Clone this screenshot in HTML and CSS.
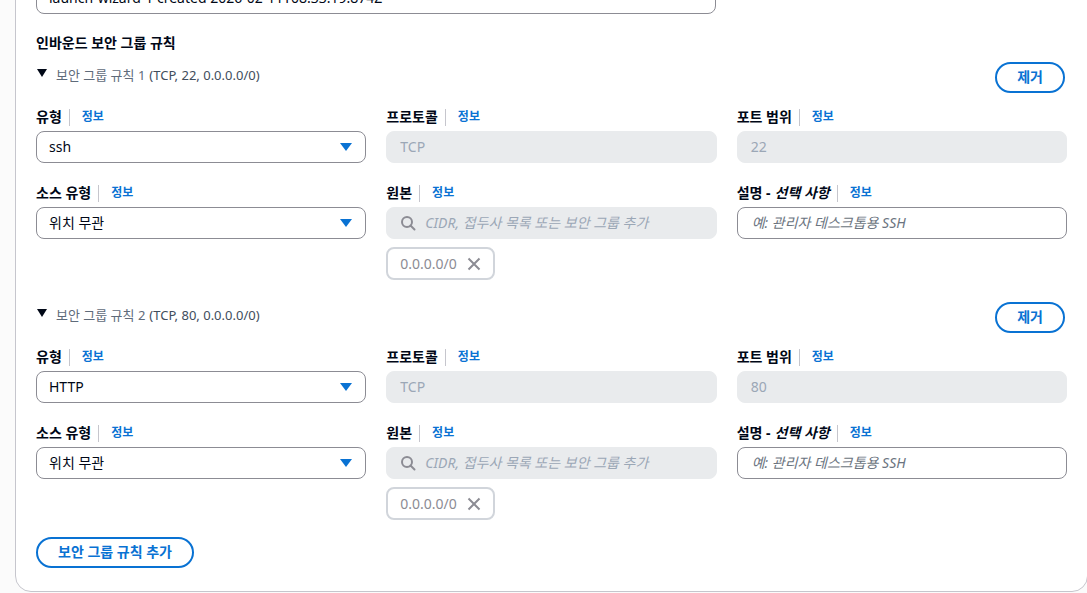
FILE: index.html
```html
<!DOCTYPE html>
<html lang="ko">
<head>
    <meta charset="UTF-8">
    <meta name="viewport" content="width=device-width, initial-scale=1.0">
    <title>인바운드 보안 그룹 규칙</title>
    <link rel="stylesheet" href="styles.css">
</head>
<body>
    <div class="card">
        <div class="top-input">launch-wizard-1 created 2026-02-11T08:33:19.874Z</div>

        <h3 class="section-title">인바운드 보안 그룹 규칙</h3>

        <!-- rule 1 -->
        <div class="rule">
            <div class="rule-head">
                <div class="rule-name">
                    <span class="caret"></span>
                    <span class="rule-title">보안 그룹 규칙 1</span>
                    <span class="rule-sum">(TCP, 22, 0.0.0.0/0)</span>
                </div>
                <button class="btn">제거</button>
            </div>
            <div class="grid">
                <div class="field">
                    <div class="label">유형<span class="sep"></span><a href="#" class="info">정보</a></div>
                    <div class="select">ssh<span class="arrow"></span></div>
                </div>
                <div class="field">
                    <div class="label">프로토콜<span class="sep"></span><a href="#" class="info">정보</a></div>
                    <div class="input disabled">TCP</div>
                </div>
                <div class="field">
                    <div class="label">포트 범위<span class="sep"></span><a href="#" class="info">정보</a></div>
                    <div class="input disabled">22</div>
                </div>
                <div class="field">
                    <div class="label">소스 유형<span class="sep"></span><a href="#" class="info">정보</a></div>
                    <div class="select">위치 무관<span class="arrow"></span></div>
                </div>
                <div class="field">
                    <div class="label">원본<span class="sep"></span><a href="#" class="info">정보</a></div>
                    <div class="input disabled search">
                        <svg class="search-ico" width="16" height="16" viewBox="0 0 16 16"><circle cx="7" cy="7" r="5" fill="none" stroke="#8c8c94" stroke-width="2"/><path d="M10.5 10.5 L14.5 14.5" stroke="#8c8c94" stroke-width="2" stroke-linecap="round"/></svg>
                        <span class="ph">CIDR, 접두사 목록 또는 보안 그룹 추가</span>
                    </div>
                    <div class="token">0.0.0.0/0
                        <svg width="16" height="16" viewBox="0 0 16 16"><path d="M2.5 2.5 L13.5 13.5 M13.5 2.5 L2.5 13.5" stroke="#8c8c94" stroke-width="2"/></svg>
                    </div>
                </div>
                <div class="field">
                    <div class="label">설명 - <i>선택 사항</i><span class="sep"></span><a href="#" class="info">정보</a></div>
                    <div class="input"><span class="ph dark">예: 관리자 데스크톱용 SSH</span></div>
                </div>
            </div>
        </div>

        <!-- rule 2 -->
        <div class="rule">
            <div class="rule-head">
                <div class="rule-name">
                    <span class="caret"></span>
                    <span class="rule-title">보안 그룹 규칙 2</span>
                    <span class="rule-sum">(TCP, 80, 0.0.0.0/0)</span>
                </div>
                <button class="btn">제거</button>
            </div>
            <div class="grid">
                <div class="field">
                    <div class="label">유형<span class="sep"></span><a href="#" class="info">정보</a></div>
                    <div class="select">HTTP<span class="arrow"></span></div>
                </div>
                <div class="field">
                    <div class="label">프로토콜<span class="sep"></span><a href="#" class="info">정보</a></div>
                    <div class="input disabled">TCP</div>
                </div>
                <div class="field">
                    <div class="label">포트 범위<span class="sep"></span><a href="#" class="info">정보</a></div>
                    <div class="input disabled">80</div>
                </div>
                <div class="field">
                    <div class="label">소스 유형<span class="sep"></span><a href="#" class="info">정보</a></div>
                    <div class="select">위치 무관<span class="arrow"></span></div>
                </div>
                <div class="field">
                    <div class="label">원본<span class="sep"></span><a href="#" class="info">정보</a></div>
                    <div class="input disabled search">
                        <svg class="search-ico" width="16" height="16" viewBox="0 0 16 16"><circle cx="7" cy="7" r="5" fill="none" stroke="#8c8c94" stroke-width="2"/><path d="M10.5 10.5 L14.5 14.5" stroke="#8c8c94" stroke-width="2" stroke-linecap="round"/></svg>
                        <span class="ph">CIDR, 접두사 목록 또는 보안 그룹 추가</span>
                    </div>
                    <div class="token">0.0.0.0/0
                        <svg width="16" height="16" viewBox="0 0 16 16"><path d="M2.5 2.5 L13.5 13.5 M13.5 2.5 L2.5 13.5" stroke="#8c8c94" stroke-width="2"/></svg>
                    </div>
                </div>
                <div class="field">
                    <div class="label">설명 - <i>선택 사항</i><span class="sep"></span><a href="#" class="info">정보</a></div>
                    <div class="input"><span class="ph dark">예: 관리자 데스크톱용 SSH</span></div>
                </div>
            </div>
        </div>

        <button class="btn add">보안 그룹 규칙 추가</button>
    </div>
</body>
</html>
```

FILE: styles.css
```css
* {
    margin: 0;
    padding: 0;
    box-sizing: border-box;
}

body {
    font-family: 'Noto Sans', 'Noto Sans CJK KR', sans-serif;
    font-size: 14px;
    line-height: 20px;
    color: #000716;
    background-color: #fbfbfb;
    overflow: hidden;
}

.card {
    width: 1073px;
    margin-left: 15px;
    margin-top: -24px;
    padding: 5px 20px 23px 20px;
    background-color: #fff;
    border: 1px solid #c6c6cd;
    border-radius: 16px;
}

.top-input {
    width: 680px;
    height: 32px;
    padding: 5px 12px;
    border: 1px solid #8c8c94;
    border-radius: 8px;
}

.section-title {
    font-size: 14px;
    font-weight: 700;
    margin-top: 19px;
}

.rule-head {
    display: flex;
    justify-content: space-between;
    align-items: flex-start;
    margin-top: 9px;
}

.rule + .rule .rule-head {
    margin-top: 22px;
}

.rule-name {
    display: flex;
    align-items: center;
    font-size: 13px;
    padding-top: 3px;
    padding-left: 1px;
}

.caret {
    width: 0;
    height: 0;
    border-left: 5px solid transparent;
    border-right: 5px solid transparent;
    border-top: 8px solid #000716;
    margin-right: 9px;
    margin-top: -4px;
}

.rule-title {
    color: #5f6b7a;
    margin-right: 4px;
}

.rule-sum {
    color: #414d5c;
}

.btn {
    font-family: inherit;
    font-size: 14px;
    font-weight: 700;
    line-height: 20px;
    color: #0972d3;
    background-color: #fff;
    border: 2px solid #0972d3;
    border-radius: 20px;
    padding: 3px 20px 4px 20px;
    cursor: pointer;
}

.rule-head .btn {
    margin-right: 2px;
}

.btn:hover {
    background-color: #f0fbff;
}

.btn.add {
    margin-top: 17px;
}

.grid {
    display: grid;
    grid-template-columns: 1fr 1fr 1fr;
    column-gap: 20px;
    row-gap: 20px;
    margin-top: 14px;
}

.label {
    display: flex;
    align-items: center;
    font-weight: 700;
    margin-bottom: 4px;
}

.label i {
    margin-left: 4px;
}

.sep {
    width: 1px;
    height: 17px;
    background-color: #c6c6cd;
    margin: 0 12px 0 7px;
}

.info {
    font-size: 12px;
    color: #0972d3;
    text-decoration: none;
    font-weight: 700;
}

.select,
.input {
    height: 32px;
    padding: 5px 12px;
    border: 1px solid #8c8c94;
    border-radius: 8px;
    display: flex;
    align-items: center;
}

.select {
    justify-content: space-between;
}

.arrow {
    width: 0;
    height: 0;
    border-left: 6px solid transparent;
    border-right: 6px solid transparent;
    border-top: 8px solid #0972d3;
    margin-right: 1px;
}

.input.disabled {
    background-color: #e9ebed;
    border-color: #e9ebed;
    color: #9ba7b6;
    padding-left: 13px;
}

.search-ico {
    margin-right: 9px;
}

.search {
    padding-left: 11px;
}

.ph {
    font-style: italic;
    color: #9ba7b6;
}

.ph.dark {
    color: #6b7480;
    padding-left: 2px;
}

.token {
    display: inline-flex;
    align-items: center;
    gap: 9px;
    height: 33px;
    margin-top: 8px;
    padding: 0 11px 0 12px;
    border: 2px solid #d1d5db;
    border-radius: 8px;
    color: #8c8c94;
}
```
